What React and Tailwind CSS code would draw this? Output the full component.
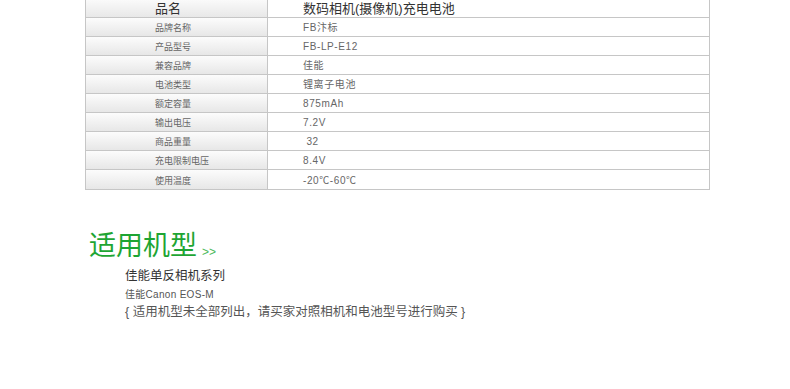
const rows = [
  ["品牌名称", "FB汴标"],
  ["产品型号", "FB-LP-E12"],
  ["兼容品牌", "佳能"],
  ["电池类型", "锂离子电池"],
  ["额定容量", "875mAh"],
  ["输出电压", "7.2V"],
  ["商品重量", "\u00a032"],
  ["充电限制电压", "8.4V"],
  ["使用温度", "-20℃-60℃"],
]

const font = { fontFamily: '"Liberation Sans", "Noto Sans CJK SC", sans-serif' }

export default function App() {
  return (
    <div className="w-[790px] h-[389px] bg-white overflow-hidden" style={font}>
      {/* Spec table */}
      <div className="ml-[85px] w-[625px] border-l border-r border-b border-[#c6c6c6]">
        <div className="flex h-[18px] border-b border-[#c6c6c6]">
          <div className="w-[182px] shrink-0 border-r border-[#c6c6c6] bg-linear-to-b from-[#fafafa] to-[#e8e8e8] flex items-end pb-[2px] pl-[69px] text-[13px] leading-none text-[#333]">
            品名
          </div>
          <div className="flex-1 flex items-end pb-[2px] pl-[35px] text-[13px] leading-none text-[#333]">
            数码相机(摄像机)充电电池
          </div>
        </div>
        {rows.map(([k, v], i) => (
          <div
            key={k}
            className={
              "flex h-[19px] " + (i < rows.length - 1 ? "border-b border-[#c6c6c6]" : "")
            }
          >
            <div className="w-[182px] shrink-0 border-r border-[#c6c6c6] bg-linear-to-b from-[#fcfcfc] to-[#e7e7e7] flex items-end pb-[3px] pl-[69px] text-[9px] leading-none text-[#666]">
              {k}
            </div>
            <div className="flex-1 flex items-end pb-[3px] pl-[35px] text-[10px] leading-none tracking-[0.6px] text-[#666] whitespace-pre">
              {v}
            </div>
          </div>
        ))}
      </div>

      {/* Compatible models */}
      <div className="mt-[43px] ml-[89px] flex items-end gap-[5px]">
        <span className="text-[27px] leading-none text-[#1ea533]">适用机型</span>
        <span className="text-[12px] leading-none text-[#4cb85a] mb-[2px]">&gt;&gt;</span>
      </div>
      <div className="ml-[125px] mt-[8px] flex flex-col">
        <span className="text-[12.5px] leading-[16px] text-[#333]">佳能单反相机系列</span>
        <span className="text-[10px] leading-[14px] mt-[4px] tracking-[0.3px] text-[#555]">佳能Canon EOS-M</span>
        <span className="text-[12.5px] leading-[16px] mt-[2px] text-[#555]">
          {"{ 适用机型未全部列出，请买家对照相机和电池型号进行购买 }"}
        </span>
      </div>
    </div>
  )
}
